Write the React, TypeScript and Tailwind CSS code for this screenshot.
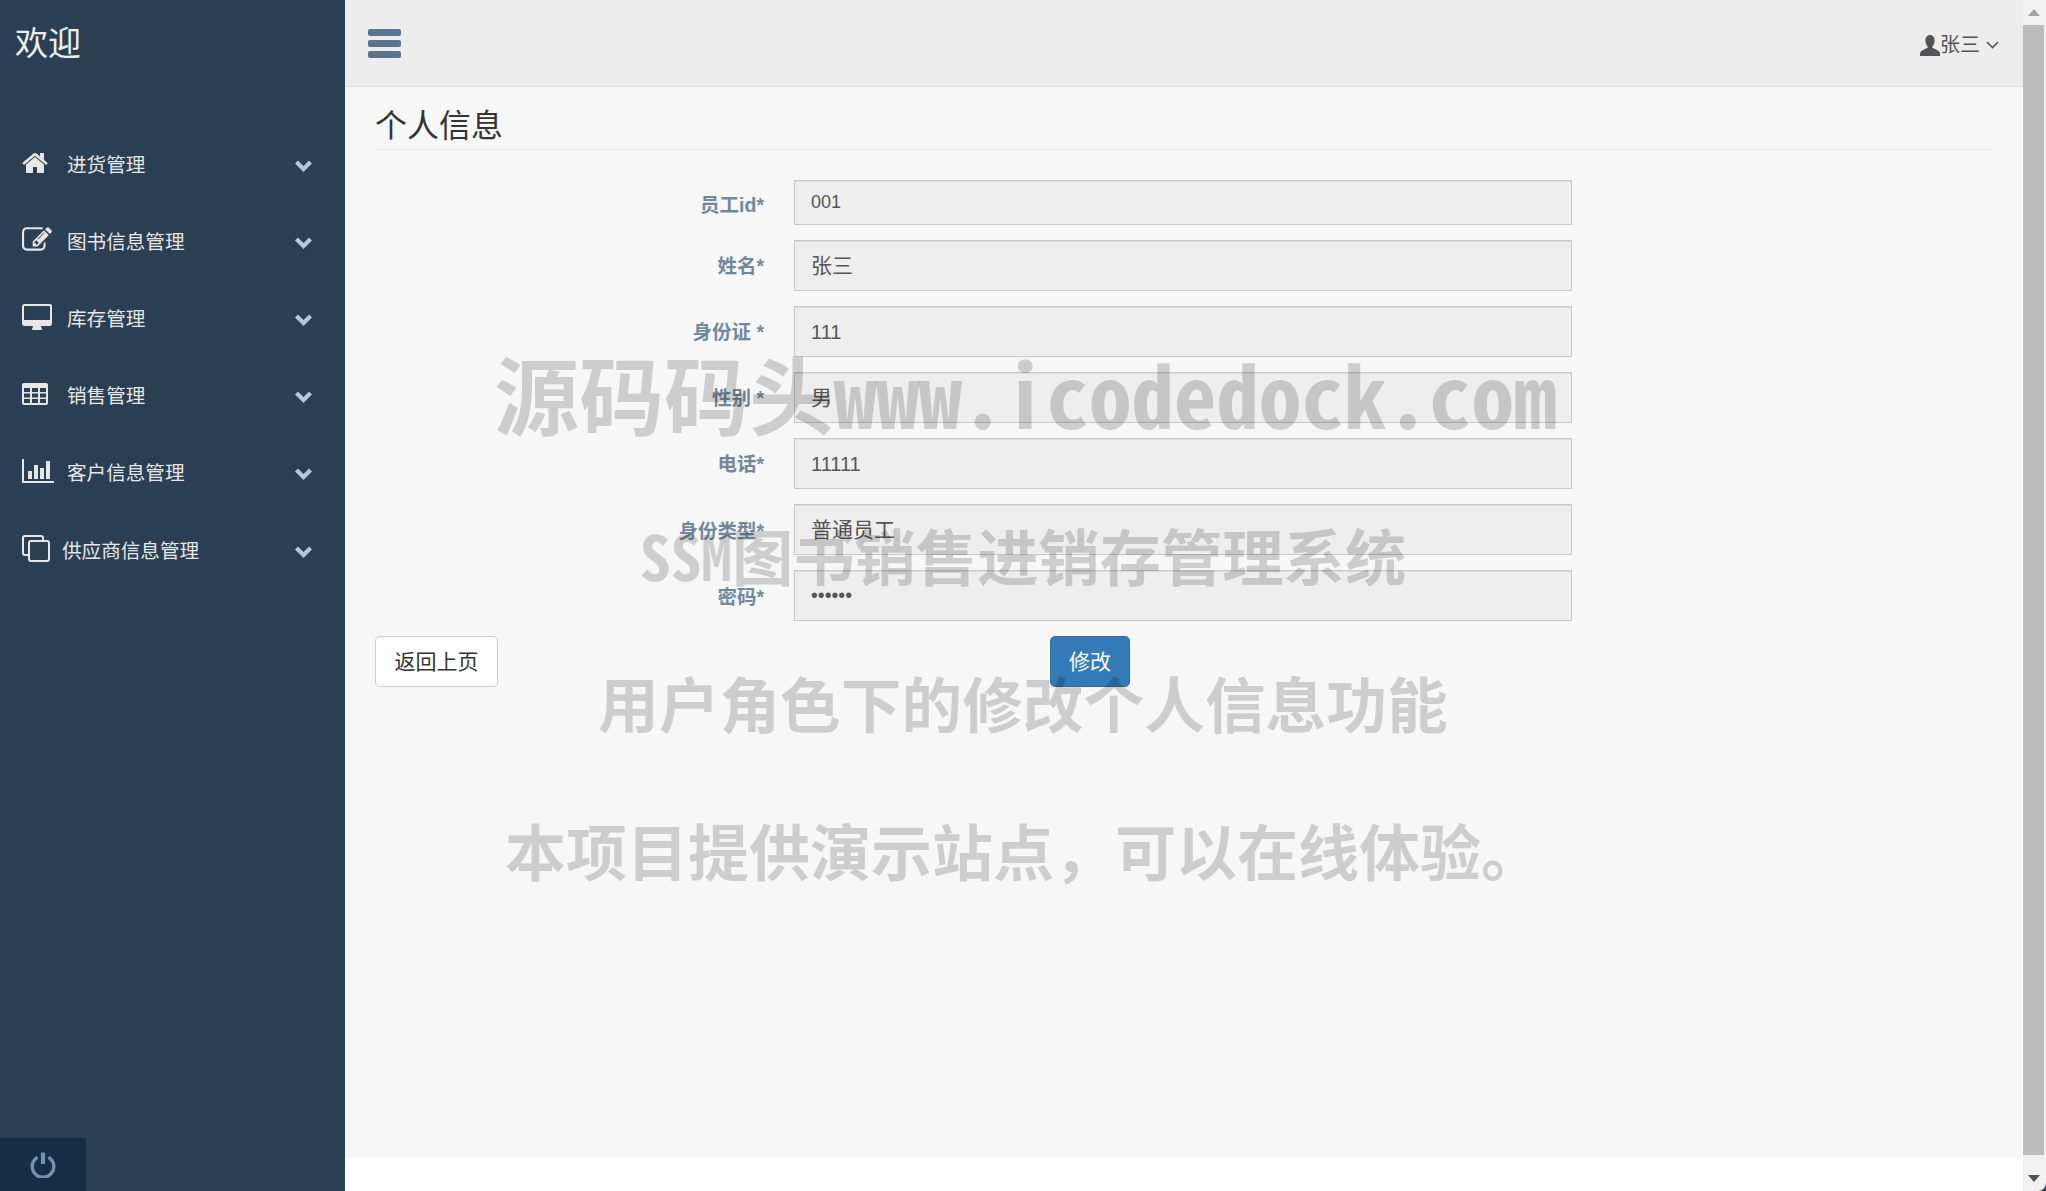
import type { ReactNode } from "react";

const FONT = "[font-family:'Liberation_Sans','Noto_Sans_CJK_SC',sans-serif]";

function HomeIcon() {
  return (
    <svg width="28" height="28" viewBox="0 0 1792 1792" fill="currentColor">
      <path d="M1408 992v480q0 26-19 45t-45 19h-384v-384h-256v384h-384q-26 0-45-19t-19-45v-480q0-1 .5-3t.5-3l575-474 575 474q1 2 1 6zm223-69l-62 74q-8 9-21 11h-3q-13 0-21-7l-692-577-692 577q-12 8-24 7-13-2-21-11l-62-74q-8-10-7-23.500t11-21.500l719-599q32-26 76-26t76 26l244 204v-195q0-14 9-23t23-9h192q14 0 23 9t9 23v408l219 182q10 8 11 21.500t-7 23.500z" />
    </svg>
  );
}

function EditIcon() {
  return (
    <svg width="30" height="30" viewBox="0 0 1792 1792" fill="currentColor">
      <path d="M888 1184l116-116-152-152-116 116v56h96v96h56zm440-720q-16-16-33 1l-350 350q-17 17-1 33t33-1l350-350q17-17 1-33zm80 594v190q0 119-84.500 203.500t-203.500 84.500h-832q-119 0-203.500-84.500t-84.500-203.500v-832q0-119 84.500-203.500t203.500-84.500h832q63 0 117 25 15 7 18 23 3 17-9 29l-49 49q-14 14-32 8-23-6-45-6h-832q-66 0-113 47t-47 113v832q0 66 47 113t113 47h832q66 0 113-47t47-113v-126q0-13 9-22l64-64q15-15 35-7t20 29zm-96-738l288 288-672 672h-288v-288zm444 132l-92 92-288-288 92-92q28-28 68-28t68 28l152 152q28 28 28 68t-28 68z" />
    </svg>
  );
}

function DesktopIcon() {
  return (
    <svg width="30" height="26" viewBox="0 0 1920 1664" fill="currentColor">
      <path d="M1792 992v-832q0-13-9.500-22.500t-22.500-9.500h-1600q-13 0-22.500 9.500t-9.500 22.500v832q0 13 9.500 22.500t22.500 9.500h1600q13 0 22.500-9.500t9.500-22.500zm128-832v1088q0 66-47 113t-113 47h-544q0 37 16 77.500t32 71 16 43.500q0 26-19 45t-45 19h-512q-26 0-45-19t-19-45q0-14 16-44t32-70 16-78h-544q-66 0-113-47t-47-113v-1088q0-66 47-113t113-47h1632q66 0 113 47t47 113z" />
    </svg>
  );
}

function TableIcon() {
  const xs = [2, 10, 18];
  const ys = [5, 10.500, 16];
  return (
    <svg width="26" height="22" viewBox="0 0 26 22">
      <rect width="26" height="22" rx="2" fill="currentColor" />
      {ys.map((y) => xs.map((x) => <rect key={`${x}-${y}`} x={x} y={y} width="6" height="4" fill="#2a3f54" />))}
    </svg>
  );
}

function BarChartIcon() {
  return (
    <svg width="32" height="24" viewBox="0 0 32 24" fill="currentColor">
      <path d="M0 0h2v22h30v2H0z" />
      <rect x="6" y="12" width="4" height="8" />
      <rect x="12" y="6" width="4" height="14" />
      <rect x="18" y="9" width="4" height="11" />
      <rect x="24" y="2" width="4" height="18" />
    </svg>
  );
}

function CloneIcon() {
  return (
    <svg width="28" height="27" viewBox="0 0 28 27" fill="none" stroke="currentColor" strokeWidth="2">
      <path d="M6 20H3a2 2 0 0 1-2-2V3a2 2 0 0 1 2-2h16a2 2 0 0 1 2 2v3" />
      <rect x="7" y="6" width="20" height="20" rx="2" />
    </svg>
  );
}

function Chevron() {
  return (
    <svg width="17" height="13" viewBox="0 0 17 13" fill="none" stroke="#b8c7d8" strokeWidth="4.200">
      <path d="M1.500 3l7 7 7-7" />
    </svg>
  );
}

function UserIcon() {
  return (
    <svg width="20" height="21" viewBox="0 0 21 21" preserveAspectRatio="none" fill="currentColor">
      <path d="M10.500 0c3 0 4.800 2.400 4.800 5.400 0 2.400-1 4.600-2.300 6v1.400c1.600.9 7.500 2.700 8 5.500V21H0v-2.700c.5-2.800 6.400-4.600 8-5.500v-1.400C6.700 10 5.700 7.800 5.700 5.400 5.700 2.400 7.500 0 10.500 0z" />
    </svg>
  );
}

function AngleDown() {
  return (
    <svg width="13" height="8" viewBox="0 0 13 8" fill="none" stroke="currentColor" strokeWidth="1.600">
      <path d="M1 1l5.500 5.500L12 1" />
    </svg>
  );
}

function PowerIcon() {
  return (
    <svg width="26" height="26" viewBox="0 0 26 26" fill="none" stroke="#7491b0" strokeWidth="3.400">
      <path d="M7.500 5.200a10.800 10.800 0 1 0 11 0" />
      <path d="M13 0.500v11.500" strokeWidth="4.200" />
    </svg>
  );
}

const nav: { label: string; icon: ReactNode; cls: string; row: string }[] = [
  { label: "进货管理", icon: <HomeIcon />, cls: "w-[45px]", row: "h-[77px]" },
  { label: "图书信息管理", icon: <EditIcon />, cls: "w-[45px]", row: "h-[77px]" },
  { label: "库存管理", icon: <DesktopIcon />, cls: "w-[45px]", row: "h-[77px]" },
  { label: "销售管理", icon: <TableIcon />, cls: "w-[45px]", row: "h-[77px]" },
  { label: "客户信息管理", icon: <BarChartIcon />, cls: "w-[45px]", row: "h-[77px]" },
  { label: "供应商信息管理", icon: <CloneIcon />, cls: "w-[40px]", row: "h-[79px]" },
];

const fields = [
  { label: "员工id*", value: "001", row: "h-[45px]", text: "text-[18px]", shift: "translate-y-[3px]" },
  { label: "姓名*", value: "张三", row: "h-[51px]", text: "text-[21px]", shift: "translate-y-[1px]" },
  { label: "身份证 *", value: "111", row: "h-[51px]", text: "text-[20px]", shift: "translate-y-[1px]" },
  { label: "性别 *", value: "男", row: "h-[51px]", text: "text-[21px]", shift: "translate-y-[1px]" },
  { label: "电话*", value: "11111", row: "h-[51px]", text: "text-[20px]", shift: "translate-y-[1px]" },
  { label: "身份类型*", value: "普通员工", row: "h-[51px]", text: "text-[21px]", shift: "translate-y-[2px]" },
  { label: "密码*", value: "••••••", row: "h-[51px]", text: "text-[19.500px]", shift: "translate-y-[2px]" },
];

export default function App() {
  return (
    <div className={`relative flex h-[1191px] w-[2046px] overflow-hidden bg-white ${FONT}`}>
      <aside className="flex h-full w-[345px] shrink-0 flex-col bg-[#2a3f54]">
        <div className="pl-[15px] pt-[21px] text-[33px] leading-[46px] text-[#ecf0f1]">欢迎</div>
        <nav className="mt-[60px] flex flex-col">
          {nav.map((item) => (
            <div key={item.label} className={`flex items-center pl-[22px] pr-[33px] text-[#e7e7e7] ${item.row}`}>
              <span className={`flex shrink-0 -translate-y-[3px] ${item.cls}`}>{item.icon}</span>
              <span className="flex-1 text-[19.600px] text-[#e7e7e7]">{item.label}</span>
              <Chevron />
            </div>
          ))}
        </nav>
        <div className="mt-auto flex h-[53px] w-[86px] items-center justify-center bg-[#172d44]">
          <PowerIcon />
        </div>
      </aside>

      <main className="flex h-full min-w-0 flex-1 flex-col">
        <header className="flex h-[87px] shrink-0 items-center justify-between border-b border-[#dcdcdc] bg-[#ededed] pl-[23px] pr-[24px]">
          <div className="flex w-[33px] flex-col gap-[4px]">
            <span className="h-[7px] rounded-[2px] bg-[#5a738e]" />
            <span className="h-[7px] rounded-[2px] bg-[#5a738e]" />
            <span className="h-[7px] rounded-[2px] bg-[#5a738e]" />
          </div>
          <div className="flex translate-y-[2px] items-center text-[#515356]">
            <UserIcon />
            <span className="text-[20px]">张三</span>
            <span className="ml-[6px]"><AngleDown /></span>
          </div>
        </header>

        <div className="flex-1 bg-[#f7f7f7] px-[30px] pt-[17px]">
          <h1 className="border-b border-[#e6e9ed] pb-[1px] text-[32px] font-normal leading-[44px] text-[#333]">个人信息</h1>
          <form className="mt-[30px] flex flex-col gap-[15px]">
            {fields.map((f) => (
              <div key={f.label} className="flex items-center gap-[30px]">
                <label className={`w-[389px] text-right text-[19.500px] font-bold text-[#73879c] ${f.shift}`}>{f.label}</label>
                <div className={`flex w-[778px] items-center border border-[#c8c8c8] bg-[#eeeeee] pl-[16px] text-[#555] shadow-[inset_0_1px_1px_rgba(0,0,0,0.075)] ${f.row} ${f.text}`}>
                  {f.value}
                </div>
              </div>
            ))}
            <div className="flex">
              <button type="button" className="h-[51px] w-[123px] rounded-[5px] border border-[#ccc] bg-white text-[21px] text-[#333]">返回上页</button>
              <button type="button" className="ml-[552px] h-[51px] w-[80px] rounded-[5px] border border-[#2e6da4] bg-[#337ab7] text-[21px] text-white">修改</button>
            </div>
          </form>
        </div>
        <div className="h-[33px] shrink-0 bg-white" />
      </main>

      <div className="flex h-full w-[23px] shrink-0 flex-col bg-[#f1f1f1]">
        <div className="flex h-[25px] items-center justify-center pr-[2px]">
          <span className="h-0 w-0 border-x-[6px] border-b-[7px] border-x-transparent border-b-[#a3a3a3]" />
        </div>
        <div className="mr-[2px] flex-1 bg-[#bcbcbc]" />
        <div className="h-[36px] bg-[#2f3a55]">
          <div className="flex h-full items-center justify-center rounded-br-[8px] bg-[#f1f1f1] pr-[2px] pt-[11px]">
            <span className="h-0 w-0 border-x-[6px] border-t-[7px] border-x-transparent border-t-[#505050]" />
          </div>
        </div>
      </div>

      <div className="pointer-events-none absolute inset-0 font-bold text-black/[.17] [font-family:'Noto_Sans_CJK_SC',sans-serif]">
        <div className="absolute left-[494px] top-[339px] whitespace-nowrap text-[85px] leading-[106px] [font-feature-settings:'hwid']">源码码头www.icodedock.com</div>
        <div className="absolute left-[640px] top-[517px] whitespace-nowrap text-[61.300px] leading-[76px] [font-feature-settings:'hwid']">SSM图书销售进销存管理系统</div>
        <div className="absolute left-[598px] top-[664px] whitespace-nowrap text-[60.700px] leading-[76px]">用户角色下的修改个人信息功能</div>
        <div className="absolute left-[505px] top-[812px] whitespace-nowrap text-[61px] leading-[76px]">本项目提供演示站点，可以在线体验。</div>
      </div>
    </div>
  );
}
